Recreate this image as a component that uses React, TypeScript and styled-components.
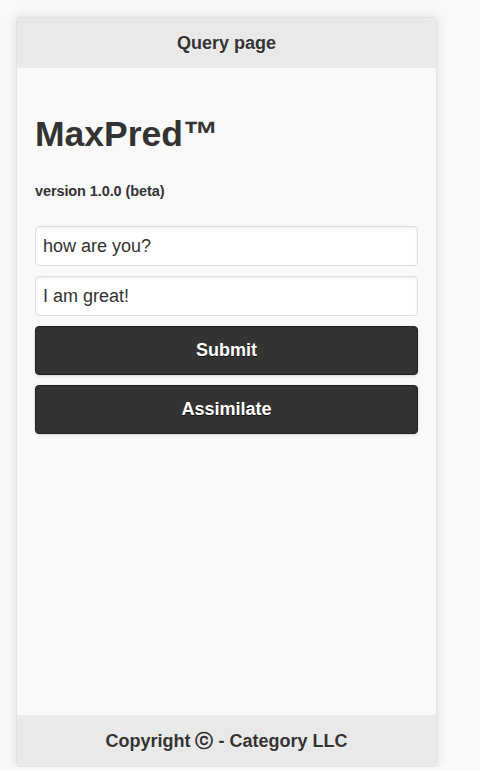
import styled, { createGlobalStyle } from "styled-components";

const GlobalStyle = createGlobalStyle`
  html, body {
    margin: 0;
    padding: 0;
    background: #f9f9f9;
    font-family: "Liberation Sans", Arial, sans-serif;
    color: #333;
  }
`;

const Page = styled.div`
  padding: 17px 0 0 16px;
`;

const Card = styled.div`
  width: 421px;
  height: 750px;
  display: flex;
  flex-direction: column;
  background: #f9f9f9;
  border: 1px solid #e2e2e2;
  border-radius: 3px;
  box-sizing: border-box;
  box-shadow: 0 0 12px rgba(0, 0, 0, 0.12);
  overflow: hidden;
`;

const Bar = styled.div`
  height: ${(p: { h: number }) => p.h}px;
  flex-shrink: 0;
  display: flex;
  align-items: center;
  justify-content: center;
  background: #e9e9e9;
  font-size: 18px;
  font-weight: bold;
  color: #333;
  text-shadow: 0 1px 0 #f3f3f3;
`;

const Content = styled.div`
  flex: 1;
  padding: 0 18px;
  display: flex;
  flex-direction: column;
  background: #f9f9f9;
`;

const Title = styled.h1`
  margin: 46px 0 0;
  font-size: 35.5px;
  line-height: 40px;
  font-weight: bold;
  color: #333;
`;

const Version = styled.p`
  margin: 29px 0 0;
  font-size: 14.5px;
  line-height: 16px;
  font-weight: bold;
  letter-spacing: -0.1px;
  color: #333;
`;

const Form = styled.div`
  margin-top: 27px;
  display: flex;
  flex-direction: column;
  gap: 10px;
`;

const Input = styled.input`
  height: 40px;
  box-sizing: border-box;
  padding: 0 7px;
  border: 1px solid #dcdcdc;
  border-radius: 4px;
  background: #fff;
  box-shadow: inset 0 1px 3px rgba(0, 0, 0, 0.08);
  font-family: "Liberation Sans", Arial, sans-serif;
  font-size: 18px;
  color: #333;
  outline: none;
`;

const Button = styled.button`
  height: 49px;
  border: 1px solid #1f1f1f;
  border-radius: 4px;
  background: #333;
  color: #fff;
  font-family: "Liberation Sans", Arial, sans-serif;
  font-size: 18px;
  font-weight: bold;
  text-shadow: 0 1px 0 #111;
  box-shadow: 0 1px 3px rgba(0, 0, 0, 0.15);
  cursor: pointer;
`;

const App = () => {
  return (
    <>
      <GlobalStyle />
      <Page>
        <Card>
          <Bar h={50}>Query page</Bar>
          <Content>
            <Title>MaxPred™</Title>
            <Version>version 1.0.0 (beta)</Version>
            <Form>
              <Input defaultValue="how are you?" />
              <Input defaultValue="I am great!" />
              <Button>Submit</Button>
              <Button>Assimilate</Button>
            </Form>
          </Content>
          <Bar h={51}>Copyright ⓒ - Category LLC</Bar>
        </Card>
      </Page>
    </>
  );
};

export default App;
